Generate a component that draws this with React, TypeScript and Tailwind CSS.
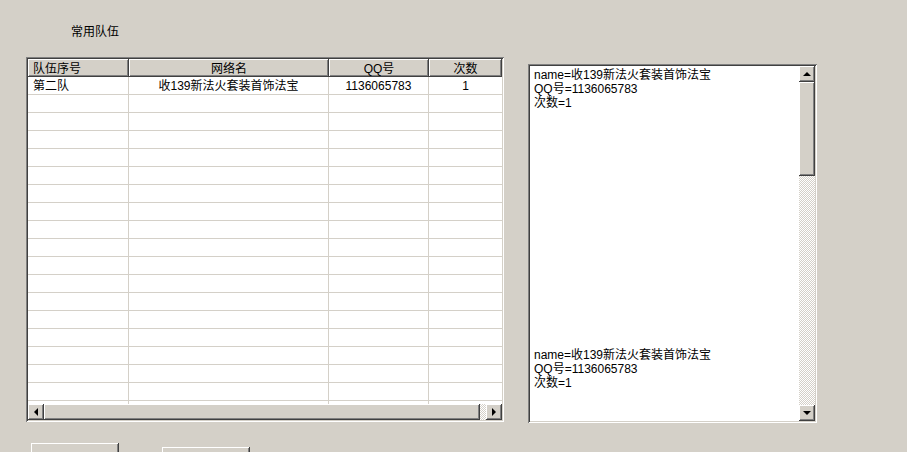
import React from "react";

const FONT = "font-['Liberation_Sans','Noto_Sans_CJK_SC',sans-serif]";

// classic win32 bevels
const sunken =
  "shadow-[inset_1px_1px_#808080,inset_-1px_-1px_#ffffff,inset_2px_2px_#404040,inset_-2px_-2px_#d4d0c8]";
const raised =
  "shadow-[inset_-1px_-1px_#404040,inset_1px_1px_#ffffff,inset_-2px_-2px_#808080]";
const checker =
  "bg-[repeating-conic-gradient(#ffffff_0_25%,#d4d0c8_0_50%)] bg-[length:2px_2px]";

const cols = [
  { title: "队伍序号", w: "w-[101px]", align: "text-left pl-[5px]" },
  { title: "网络名", w: "w-[200px]", align: "text-center" },
  { title: "QQ号", w: "w-[100px]", align: "text-center" },
  { title: "次数", w: "flex-1", align: "text-center" },
];

const rows: string[][] = [["第二队", "收139新法火套装首饰法宝", "1136065783", "1"]];
while (rows.length < 19) rows.push(["", "", "", ""]);

function Arrow({ dir }: { dir: "left" | "right" | "up" | "down" }) {
  const pts = {
    left: "5,0 5,8 1,4",
    right: "1,0 1,8 5,4",
    up: "0,5 8,5 4,1",
    down: "0,1 8,1 4,5",
  }[dir];
  const vertical = dir === "up" || dir === "down";
  return (
    <svg
      width={vertical ? 8 : 6}
      height={vertical ? 6 : 8}
      viewBox={vertical ? "0 0 8 6" : "0 0 6 8"}
    >
      <polygon points={pts} fill="#000" />
    </svg>
  );
}

function ScrollButton({ dir }: { dir: "left" | "right" | "up" | "down" }) {
  return (
    <div
      className={`flex h-[16px] w-[16px] shrink-0 items-center justify-center bg-[#d4d0c8] ${raised}`}
    >
      <Arrow dir={dir} />
    </div>
  );
}

function TeamList() {
  return (
    <div className={`h-[365px] w-[478px] bg-white p-[2px] ${sunken}`}>
      <div className="flex h-full flex-col">
        <div className="flex h-[18px] shrink-0 bg-[#d4d0c8]">
          {cols.map((c) => (
            <div
              key={c.title}
              className={`${c.w} ${c.align} h-[18px] leading-[20px] ${raised}`}
            >
              {c.title}
            </div>
          ))}
        </div>
        <div className="flex-1 overflow-hidden">
          {rows.map((r, i) => (
            <div key={i} className="flex h-[18px] border-b border-[#d4d0c8]">
              {r.map((v, j) => (
                <div
                  key={j}
                  className={`${cols[j].w} ${cols[j].align} leading-[19px] ${
                    j < 3 ? "border-r border-[#d4d0c8]" : ""
                  }`}
                >
                  {v}
                </div>
              ))}
            </div>
          ))}
        </div>
        <div className="flex h-[16px] shrink-0 bg-[#d4d0c8]">
          <ScrollButton dir="left" />
          <div className={`w-[436px] bg-[#d4d0c8] ${raised}`} />
          <div className={`flex-1 ${checker}`} />
          <ScrollButton dir="right" />
        </div>
      </div>
    </div>
  );
}

function InfoBox() {
  const block = (
    <>
      <div>name=收139新法火套装首饰法宝</div>
      <div>QQ号=1136065783</div>
      <div>次数=1</div>
    </>
  );
  return (
    <div className={`h-[359px] w-[289px] bg-white p-[2px] ${sunken}`}>
      <div className="flex h-full">
        <div className="flex-1 pl-[4px] pt-[2px] leading-[14px]">
          {block}
          <div className="h-[238px]" />
          {block}
        </div>
        <div className="flex w-[16px] flex-col">
          <ScrollButton dir="up" />
          <div className={`h-[94px] bg-[#d4d0c8] ${raised}`} />
          <div className={`flex-1 ${checker}`} />
          <ScrollButton dir="down" />
        </div>
      </div>
    </div>
  );
}

export default function App() {
  return (
    <div
      className={`h-[452px] w-[907px] overflow-hidden bg-[#d4d0c8] text-[12px] text-black ${FONT}`}
    >
      <div className="mt-[25px] h-[14px] pl-[71px] leading-[14px]">常用队伍</div>

      <div className="mt-[18px] flex items-start">
        <div className="ml-[26px]">
          <TeamList />
        </div>
        <div className="ml-[24px] mt-[7px]">
          <InfoBox />
        </div>
      </div>

      <div className="mt-[20px] flex items-start">
        <button
          type="button"
          className={`ml-[31px] h-[30px] w-[88px] bg-[#d4d0c8] ${raised}`}
        />
        <button
          type="button"
          className={`ml-[43px] mt-[4px] h-[30px] w-[88px] bg-[#d4d0c8] ${raised}`}
        />
      </div>
    </div>
  );
}
